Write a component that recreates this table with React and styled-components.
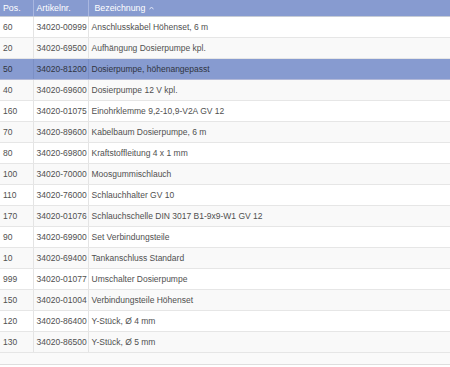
import React from 'react';
import styled, { createGlobalStyle } from 'styled-components';

const GlobalStyle = createGlobalStyle`
  html, body {
    margin: 0;
    padding: 0;
    background: #fff;
  }
  body {
    font-family: "Liberation Sans", Arial, sans-serif;
  }
`;

const Wrapper = styled.div`
  width: 450px;
  overflow: hidden;
`;

const Table = styled.table`
  width: 100%;
  border-collapse: collapse;
  table-layout: fixed;
  font-size: 8.5px;
  color: #505050;
`;

const HeadCell = styled.th`
  height: 16px;
  padding: 0 0 0 ${p => p.$pad || 3}px;
  background: #879bd0;
  color: #fff;
  font-weight: normal;
  font-size: 8.8px;
  text-align: left;
  white-space: nowrap;
  border-left: 1px solid #a9b7e0;
  border-bottom: 1px solid #c6ccd6;
  &:first-child {
    border-left: none;
  }
`;

const Row = styled.tr`
  background: ${p => (p.$selected ? '#879bd0' : p.$odd ? '#f9f9f9' : '#fff')};
  color: ${p => (p.$selected ? '#2f3440' : '#505050')};
`;

const Cell = styled.td`
  height: 20px;
  padding: 0 0 0 3px;
  white-space: nowrap;
  overflow: hidden;
  border-left: 1px solid ${p => (p.$selected ? '#7b8fc4' : '#e4e4e4')};
  border-bottom: 1px solid ${p => (p.$selected ? '#b3b9d8' : '#e6e6e6')};
  &:first-child {
    border-left: none;
  }
`;

const Footer = styled.div`
  height: 11px;
  background: #fafafa;
  border-bottom: 1px solid #dedede;
`;

const Caret = styled.svg`
  margin-left: 4px;
  vertical-align: 1px;
`;

const rows = [
  ['60', '34020-00999', 'Anschlusskabel Höhenset, 6 m'],
  ['20', '34020-69500', 'Aufhängung Dosierpumpe kpl.'],
  ['50', '34020-81200', 'Dosierpumpe, höhenangepasst'],
  ['40', '34020-69600', 'Dosierpumpe 12 V kpl.'],
  ['160', '34020-01075', 'Einohrklemme 9,2-10,9-V2A GV 12'],
  ['70', '34020-89600', 'Kabelbaum Dosierpumpe, 6 m'],
  ['80', '34020-69800', 'Kraftstoffleitung 4 x 1 mm'],
  ['100', '34020-70000', 'Moosgummischlauch'],
  ['110', '34020-76000', 'Schlauchhalter GV 10'],
  ['170', '34020-01076', 'Schlauchschelle DIN 3017 B1-9x9-W1 GV 12'],
  ['90', '34020-69900', 'Set Verbindungsteile'],
  ['10', '34020-69400', 'Tankanschluss Standard'],
  ['999', '34020-01077', 'Umschalter Dosierpumpe'],
  ['150', '34020-01004', 'Verbindungsteile Höhenset'],
  ['120', '34020-86400', 'Y-Stück, Ø 4 mm'],
  ['130', '34020-86500', 'Y-Stück, Ø 5 mm'],
];

const App = () => {
  const selected = 2;
  return (
    <Wrapper>
      <GlobalStyle />
      <Table>
        <colgroup>
          <col style={{ width: 33 }} />
          <col style={{ width: 55 }} />
          <col />
        </colgroup>
        <thead>
          <tr>
            <HeadCell>Pos.</HeadCell>
            <HeadCell>Artikelnr.</HeadCell>
            <HeadCell $pad={6}>
              Bezeichnung
              <Caret width="5" height="4" viewBox="0 0 5 4">
                <path d="M0.5 3.3 L2.5 1 L4.5 3.3" fill="none" stroke="#dfe5f5" strokeWidth="1" />
              </Caret>
            </HeadCell>
          </tr>
        </thead>
        <tbody>
          {rows.map((r, i) => (
            <Row key={r[1]} $odd={i % 2 === 1} $selected={i === selected}>
              {r.map((c, j) => (
                <Cell key={j} $selected={i === selected}>{c}</Cell>
              ))}
            </Row>
          ))}
        </tbody>
      </Table>
      <Footer />
    </Wrapper>
  );
};

export default App;
